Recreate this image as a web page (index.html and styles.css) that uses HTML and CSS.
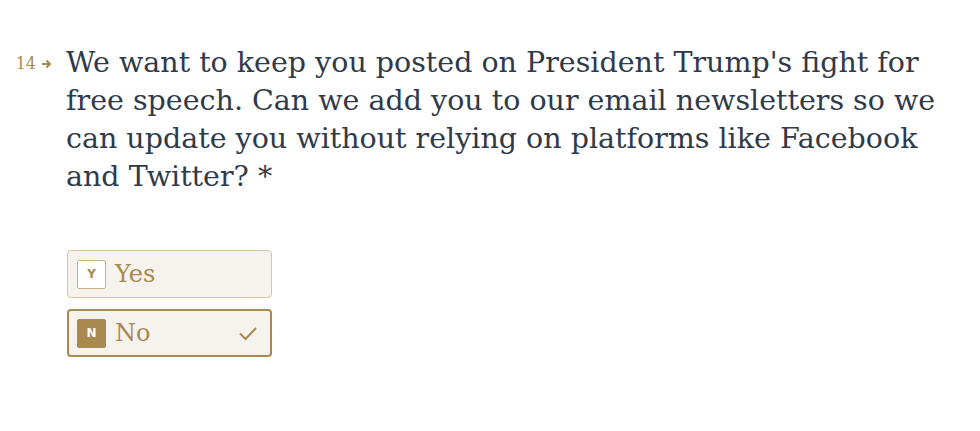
FILE: index.html
```html
<!DOCTYPE html>
<html lang="en">
<head>
<meta charset="utf-8">
<link rel="stylesheet" href="styles.css">
</head>
<body>
<main class="page">
  <section class="question">
    <div class="counter">
      <span class="num">14</span>
      <svg class="arrow" width="11" height="10" viewBox="0 0 11 10"><path d="M1 5h8M5.5 1.5L9 5l-3.5 3.5" fill="none" stroke="#a8894f" stroke-width="2"/></svg>
    </div>
    <div class="body">
      <h1 class="title">We want to keep you posted on President Trump's fight for free speech. Can we add you to our email newsletters so we can update you without relying on platforms like Facebook and Twitter? *</h1>
      <div class="choices">
        <div class="choice">
          <span class="key">Y</span>
          <span class="label">Yes</span>
        </div>
        <div class="choice selected">
          <span class="key">N</span>
          <span class="label">No</span>
          <svg class="check" width="20" height="16" viewBox="0 0 20 16"><path d="M2 8.5l5.5 5.5L18 3" fill="none" stroke="#a8894f" stroke-width="2"/></svg>
        </div>
      </div>
    </div>
  </section>
</main>
</body>
</html>
```
FILE: styles.css
```css
html, body {
  margin: 0;
  padding: 0;
  background: #ffffff;
}
.page {
  padding: 44px 0 0 0;
}
.question {
  display: flex;
  align-items: flex-start;
}
.counter {
  width: 52px;
  display: flex;
  justify-content: flex-end;
  align-items: center;
  gap: 5px;
  padding-top: 10px;
  padding-right: 14px;
  box-sizing: content-box;
}
.num {
  font-family: "DejaVu Serif", serif;
  font-size: 16px;
  color: #a8894f;
  line-height: 20px;
}
.arrow {
  display: block;
}
.body {
  width: 870px;
}
.title {
  margin: 0;
  font-family: "DejaVu Serif", serif;
  font-weight: normal;
  font-size: 28.5px;
  line-height: 38px;
  color: #2f3a4a;
}
.choices {
  margin-top: 54px;
  display: flex;
  flex-direction: column;
  gap: 11px;
  width: 205px;
  margin-left: 1px;
}
.choice {
  position: relative;
  display: flex;
  align-items: center;
  height: 48px;
  box-sizing: border-box;
  padding: 0 9px;
  background: #f6f3ee;
  border: 1px solid #d6c6a4;
  border-radius: 4px;
}
.choice.selected {
  border: 2px solid #a8894f;
  padding: 0 8px;
}
.key {
  width: 29px;
  height: 29px;
  box-sizing: border-box;
  border: 1px solid #c9b48a;
  background: #ffffff;
  border-radius: 2px;
  display: flex;
  align-items: center;
  justify-content: center;
  font-family: "DejaVu Sans", sans-serif;
  font-weight: bold;
  font-size: 12px;
  color: #a8894f;
}
.selected .key {
  background: #a8894f;
  border-color: #a8894f;
  color: #ffffff;
}
.label {
  margin-left: 9px;
  font-family: "DejaVu Serif", serif;
  font-size: 24px;
  color: #a8894f;
  line-height: 1;
}
.check {
  margin-left: auto;
  margin-right: 4px;
}
```
